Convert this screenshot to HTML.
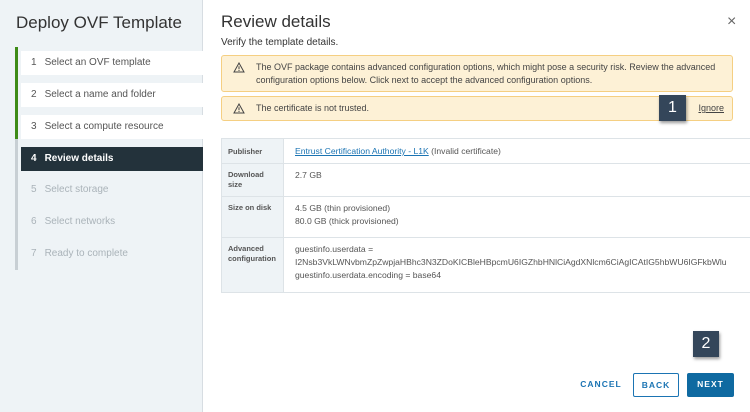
<!DOCTYPE html><html><head><style>
*{box-sizing:border-box;margin:0;padding:0}
body{width:750px;height:412px;overflow:hidden;font-family:"Liberation Sans",sans-serif;background:#fff;position:relative;color:#333}
.l{position:absolute;left:0;top:0;width:203px;height:412px;background:#eef3f6;border-right:1px solid #d7dde2}
.a{position:absolute}
.step{position:absolute;left:21px;width:182px;height:24px;font-size:10px;line-height:24px;padding-left:10px;color:#555}
.step b{font-weight:normal;margin-right:8px}
.w{background:#fff}
.g{color:#aab3b9}
.alert{position:absolute;left:221px;width:512px;background:#fdf1d6;border:1px solid #f5cf82;border-radius:3px;font-size:9px;line-height:13px;color:#444;padding:5px 10px 5px 34px}
.tri{position:absolute;left:11px;top:6px}
td{border-bottom:1px solid #dde3e7;vertical-align:top;font-size:8.6px;color:#555;padding:5px 8px 4px 11px;line-height:13px}
td.k{background:#eef3f6;width:62px;font-size:7.5px;font-weight:bold;color:#555;border-right:1px solid #dde3e7;padding:6px 6px 4px;line-height:10px}
.badge{position:absolute;background:#34465a;color:#fff;font-size:16px;text-align:center;box-shadow:1px 2px 3px rgba(0,0,0,.4)}
.btn{position:absolute;top:373px;height:24px;font-size:8.5px;font-weight:bold;letter-spacing:1px;line-height:22px;text-align:center;border-radius:2px}
</style></head><body>
<div class="l">
<div class="a" style="left:16px;top:13px;font-size:17px;color:#333">Deploy OVF Template</div>
<div class="a" style="left:15px;top:47px;width:3px;height:223px;background:#c8cfd4"></div>
<div class="a" style="left:15px;top:47px;width:3px;height:92px;background:#3e8b17"></div>
<div class="step w" style="top:51px"><b>1</b>Select an OVF template</div>
<div class="step w" style="top:83px"><b>2</b>Select a name and folder</div>
<div class="step w" style="top:115px"><b>3</b>Select a compute resource</div>
<div class="step" style="top:147px;background:#23323b;color:#fff;font-weight:bold"><b style="font-weight:bold">4</b>Review details</div>
<div class="step g" style="top:178px"><b>5</b>Select storage</div>
<div class="step g" style="top:210px"><b>6</b>Select networks</div>
<div class="step g" style="top:242px"><b>7</b>Ready to complete</div>
</div>
<div class="a" style="left:221px;top:12px;font-size:17px;color:#333">Review details</div>
<div class="a" style="left:727px;top:13px;font-size:16px;color:#666">×</div>
<div class="a" style="left:221px;top:37px;font-size:10px;color:#333">Verify the template details.</div>
<div class="alert" style="top:55px;height:37px"><svg class="tri" width="12" height="11" viewBox="0 0 12 11"><path d="M6 1L11 10H1Z" fill="none" stroke="#444" stroke-width="1"/><path d="M6 4.2v3M6 8v1" stroke="#444"/></svg>The OVF package contains advanced configuration options, which might pose a security risk. Review the advanced configuration options below. Click next to accept the advanced configuration options.</div>
<div class="alert" style="top:96px;height:25px"><svg class="tri" width="12" height="11" viewBox="0 0 12 11"><path d="M6 1L11 10H1Z" fill="none" stroke="#444" stroke-width="1"/><path d="M6 4.2v3M6 8v1" stroke="#444"/></svg>The certificate is not trusted.<span style="position:absolute;right:8px;top:5px;text-decoration:underline">Ignore</span></div>
<div class="badge" style="left:659px;top:95px;width:27px;height:26px;line-height:26px">1</div>
<table class="a" style="left:221px;top:138px;width:560px;border-collapse:collapse;border-top:1px solid #dde3e7;border-left:1px solid #dde3e7">
<tr style="height:25px"><td class="k" style="padding-top:8px">Publisher</td><td style="padding-top:6px"><span style="color:#1b74b3;text-decoration:underline">Entrust Certification Authority - L1K</span> (Invalid certificate)</td></tr>
<tr style="height:33px"><td class="k">Download size</td><td>2.7 GB</td></tr>
<tr style="height:41px"><td class="k">Size on disk</td><td>4.5 GB (thin provisioned)<br>80.0 GB (thick provisioned)</td></tr>
<tr style="height:55px"><td class="k">Advanced configuration</td><td style="white-space:nowrap">guestinfo.userdata =<br>I2Nsb3VkLWNvbmZpZwpjaHBhc3N3ZDoKICBleHBpcmU6IGZhbHNlCiAgdXNlcm6CiAgICAtIG5hbWU6IGFkbWlu<br>guestinfo.userdata.encoding = base64</td></tr>
</table>
<div class="badge" style="left:693px;top:331px;width:26px;height:26px;line-height:26px">2</div>
<div class="btn" style="left:578px;width:46px;color:#1b74b3">CANCEL</div>
<div class="btn" style="left:633px;width:46px;border:1px solid #1b74b3;color:#1b74b3">BACK</div>
<div class="btn" style="left:687px;width:47px;background:#0f6aa1;color:#fff">NEXT</div>
</body></html>
